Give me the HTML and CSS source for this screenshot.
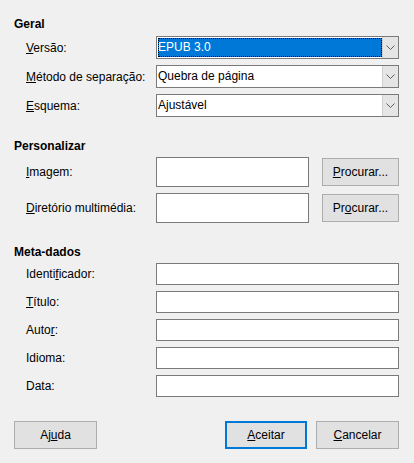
FILE: index.html
```html
<!DOCTYPE html>
<html lang="pt">
<head>
<meta charset="utf-8">
<title>EPUB</title>
<link rel="stylesheet" href="styles.css">
</head>
<body>
<div class="dialog">
  <section class="group group-geral">
    <div class="group-title">Geral</div>
    <div class="rows rows-select">
      <label class="label"><u>V</u>ersão:</label>
      <div class="select focused"><span class="value"><span class="sel-text">EPUB 3.0</span></span><span class="arrow"><svg width="9" height="5" viewBox="0 0 9 5"><path d="M0.5 0.5 L4.5 4.5 L8.5 0.5" fill="none" stroke="#5f5f5f" stroke-width="1"/></svg></span></div>
      <label class="label"><u>M</u>étodo de separação:</label>
      <div class="select"><span class="value">Quebra de página</span><span class="arrow"><svg width="9" height="5" viewBox="0 0 9 5"><path d="M0.5 0.5 L4.5 4.5 L8.5 0.5" fill="none" stroke="#5f5f5f" stroke-width="1"/></svg></span></div>
      <label class="label"><u>E</u>squema:</label>
      <div class="select"><span class="value">Ajustável</span><span class="arrow"><svg width="9" height="5" viewBox="0 0 9 5"><path d="M0.5 0.5 L4.5 4.5 L8.5 0.5" fill="none" stroke="#5f5f5f" stroke-width="1"/></svg></span></div>
    </div>
  </section>

  <section class="group group-pers">
    <div class="group-title">Personalizar</div>
    <div class="rows rows-browse">
      <label class="label"><u>I</u>magem:</label>
      <div class="input tall"></div>
      <button class="btn browse"><u>P</u>rocurar...</button>
      <label class="label"><u>D</u>iretório multimédia:</label>
      <div class="input tall"></div>
      <button class="btn browse">Pr<u>o</u>curar...</button>
    </div>
  </section>

  <section class="group group-meta">
    <div class="group-title">Meta-dados</div>
    <div class="rows rows-meta">
      <label class="label">Identi<u>f</u>icador:</label>
      <div class="input"></div>
      <label class="label"><u>T</u>ítulo:</label>
      <div class="input"></div>
      <label class="label">Auto<u>r</u>:</label>
      <div class="input"></div>
      <label class="label">Idioma:</label>
      <div class="input"></div>
      <label class="label">Data:</label>
      <div class="input"></div>
    </div>
  </section>

  <div class="footer">
    <button class="btn action">Aj<u>u</u>da</button>
    <div class="spacer"></div>
    <button class="btn action default"><u>A</u>ceitar</button>
    <button class="btn action"><u>C</u>ancelar</button>
  </div>
</div>
</body>
</html>
```

FILE: styles.css
```css
* { box-sizing: border-box; }
html, body {
  margin: 0;
  padding: 0;
  background: #f0f0f0;
}
body {
  font-family: "Liberation Sans", Arial, sans-serif;
  font-size: 12px;
  color: #000;
  width: 414px;
  height: 463px;
  overflow: hidden;
}
.dialog {
  padding: 16px 15px 0 14px;
}
.group-title {
  font-weight: bold;
  height: 16px;
  line-height: 16px;
}
u { text-decoration: underline; text-underline-offset: 1px; }
.rows {
  display: grid;
  grid-template-columns: 130px 1fr;
  padding-left: 12px;
  align-items: center;
}
.label {
  line-height: 16px;
  white-space: nowrap;
}
.rows-select {
  margin-top: 4px;
  row-gap: 6px;
}
.select {
  display: flex;
  height: 23px;
  border: 1px solid #7a7a7a;
  background: #fff;
}
.select .value {
  flex: 1;
  padding: 1px 0 1px 1px;
  line-height: 19px;
  display: flex;
}
.select .value .sel-text {
  flex: 1;
}
.select.focused .value .sel-text {
  background: #0078d7;
  color: #fff;
  outline: 1px dotted #000;
  outline-offset: -1px;
  padding-left: 0;
}
.select .arrow {
  width: 16px;
  background: #e5e5e5;
  border-left: 1px solid #cfcfcf;
  display: flex;
  align-items: center;
  justify-content: center;
}
.group-pers { margin-top: 21px; }
.rows-browse {
  grid-template-columns: 130px 153px 1fr;
  margin-top: 3px;
  row-gap: 6px;
  column-gap: 0;
}
.input {
  height: 22px;
  border: 1px solid #7a7a7a;
  background: #fff;
}
.input.tall { height: 30px; }
.btn {
  font-family: inherit;
  font-size: 12px;
  color: #000;
  background: #e1e1e1;
  border: 1px solid #adadad;
  padding: 0;
  margin: 0;
  height: 28px;
}
.browse {
  width: 77px;
  margin-left: 13px;
}
.group-meta { margin-top: 21px; }
.rows-meta {
  margin-top: 3px;
  row-gap: 6px;
}
.footer {
  display: flex;
  margin-top: 24px;
}
.spacer { flex: 1; }
.action { width: 83px; }
.action + .action { margin-left: 9px; }
.default {
  border: 2px solid #0078d7;
  width: 82px;
}
```
